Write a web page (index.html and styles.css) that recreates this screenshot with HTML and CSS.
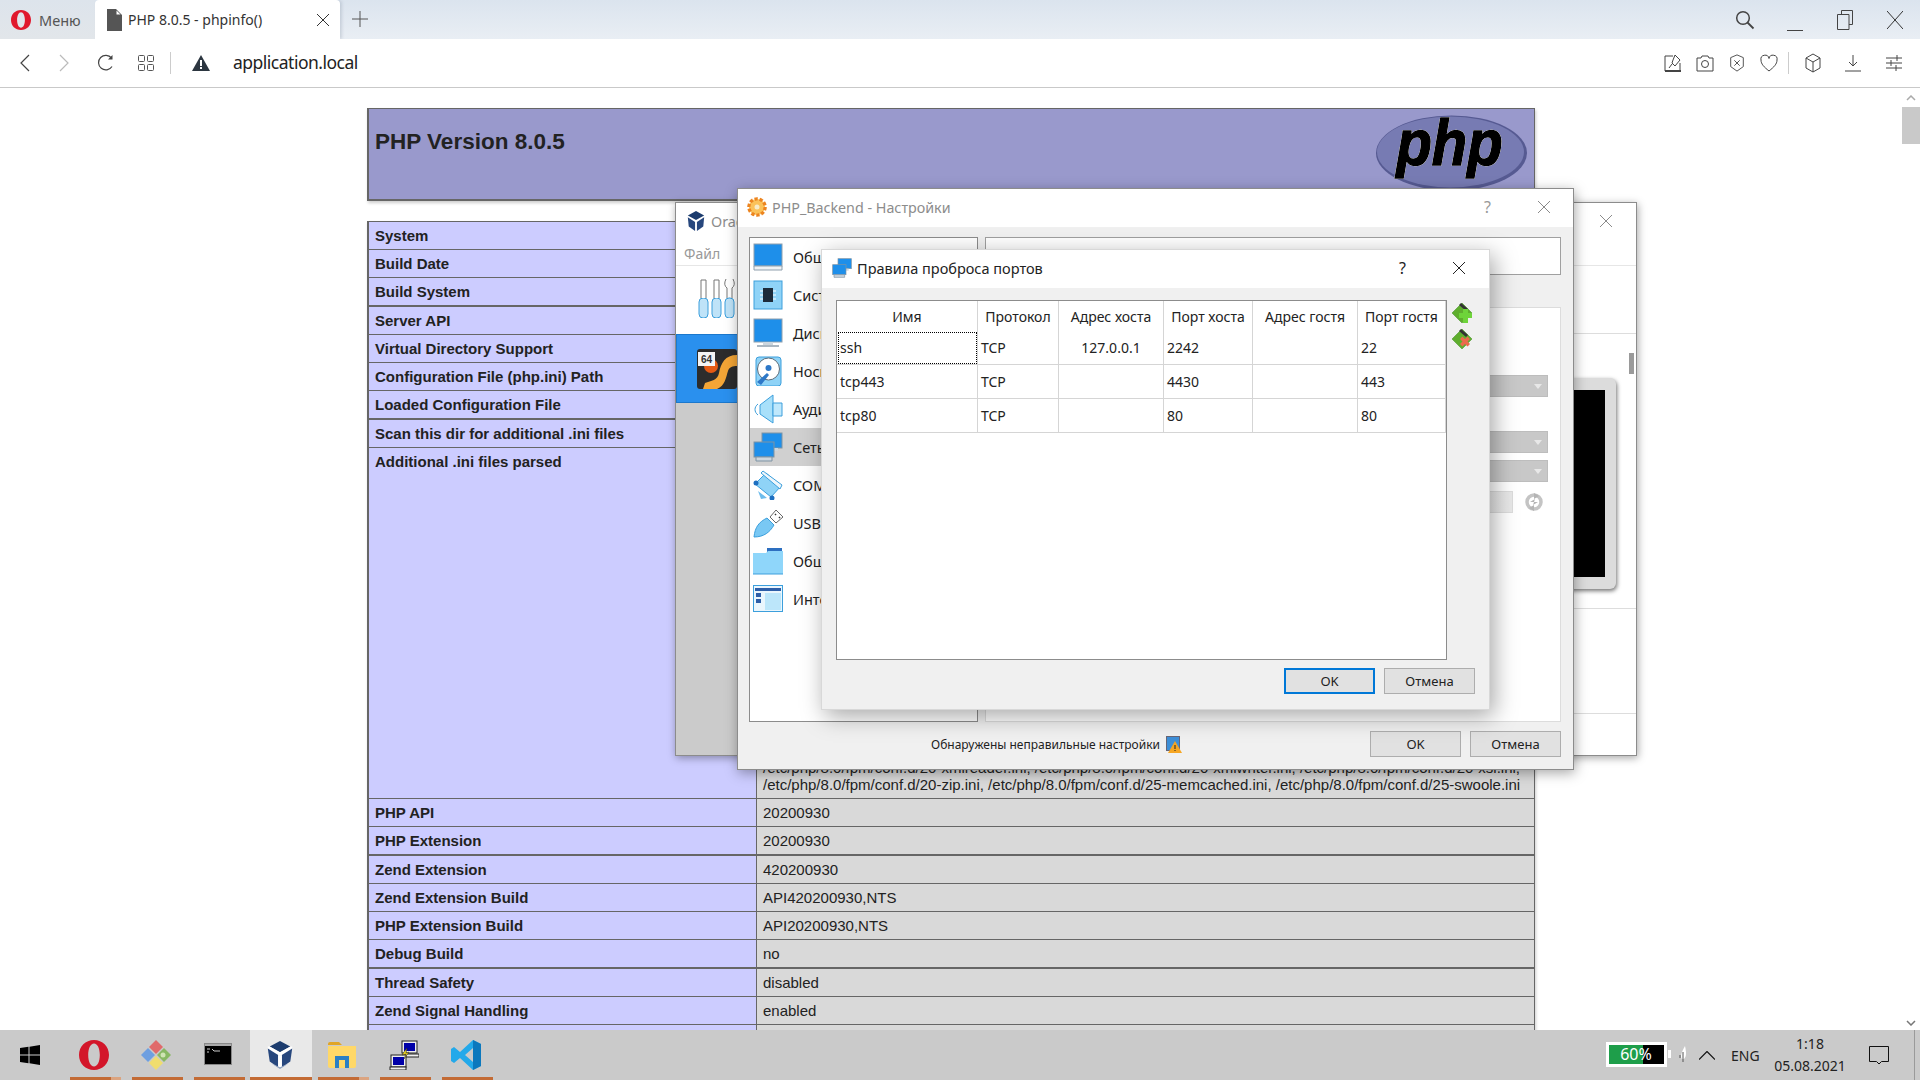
FILE: index.html
```html
<!DOCTYPE html>
<html lang="ru">
<head>
<meta charset="utf-8">
<title>PHP 8.0.5 - phpinfo()</title>
<link rel="stylesheet" href="styles.css">
</head>
<body>
<div class="app">
  <header class="tabs">
    <div class="menu-btn">
      <svg class="i-opera" viewBox="0 0 20 20"><path fill="#e0182d" fill-rule="evenodd" d="M10 0C4.200 0 0 4.300 0 10s4.200 10 10 10 10-4.300 10-10S15.800 0 10 0zm0 2.300c2.300 0 3.900 3.400 3.900 7.700s-1.600 7.700-3.900 7.700S6.100 14.300 6.100 10 7.700 2.300 10 2.300z"/></svg>
      <span>Меню</span>
    </div>
    <div class="tab">
      <svg class="i-doc" viewBox="0 0 15 22"><path fill="#555" d="M0 0h9l6 6v16H0z"/><path fill="#fff" d="M9.500 1.500l4 4h-4z"/></svg>
      <span class="tab-title">PHP 8.0.5 - phpinfo()</span>
      <svg class="i-x" viewBox="0 0 14 14"><path d="M1 1l12 12M13 1L1 13" stroke="#333" fill="none"/></svg>
    </div>
    <svg class="i-plus" viewBox="0 0 16 16"><path d="M8 0v16M0 8h16" stroke="#555" fill="none"/></svg>
    <div class="tabs-right">
      <svg class="i-search" viewBox="0 0 20 20"><circle cx="8" cy="8" r="6.300" stroke="#444" stroke-width="1.500" fill="none"/><path d="M12.500 12.500l6 6" stroke="#444" stroke-width="1.800"/></svg>
      <svg class="i-min" viewBox="0 0 16 16"><path d="M0 15.500h16" stroke="#444" fill="none"/></svg>
      <svg class="i-max" viewBox="0 0 16 20"><path d="M4.500 4V.5h11v14H12M.5 4.500h11.500v15H.5z" stroke="#444" fill="none"/></svg>
      <svg class="i-close" viewBox="0 0 16 18"><path d="M0 0l16 18M16 0L0 18" stroke="#333" fill="none"/></svg>
    </div>
  </header>

  <nav class="toolbar">
    <svg class="t-back" viewBox="0 0 10 18"><path d="M9 1L1 9l8 8" stroke="#444" stroke-width="1.200" fill="none"/></svg>
    <svg class="t-fwd" viewBox="0 0 10 18"><path d="M1 1l8 8-8 8" stroke="#bbb" stroke-width="1.200" fill="none"/></svg>
    <svg class="t-reload" viewBox="0 0 18 18"><path d="M15 12.500A7.300 7.300 0 1 1 14.500 4" stroke="#444" stroke-width="1.200" fill="none"/><path d="M15.500 1v4.500H11z" fill="#444"/></svg>
    <svg class="t-grid" viewBox="0 0 16 16"><g fill="none" stroke="#555"><rect x=".5" y=".5" width="6" height="6" rx="1"/><rect x="9.500" y=".5" width="6" height="6" rx="1"/><rect x=".5" y="9.500" width="6" height="6" rx="1"/><rect x="9.500" y="9.500" width="6" height="6" rx="1"/></g></svg>
    <span class="t-sep"></span>
    <svg class="t-warn" viewBox="0 0 18 16"><path fill="#2c3640" d="M9 0l9 16H0z"/><path fill="#fff" d="M8 5h2v6H8zM8 12h2v2H8z"/></svg>
    <span class="url">application.local</span>
    <div class="toolbar-right">
      <svg class="tr" viewBox="0 0 18 18"><path d="M1 2h8M1 2v15h15V9" stroke="#444" fill="none"/><path d="M1 17h16" stroke="#444" stroke-width="2"/><path d="M11 1l5 5-5 6-3-3 1-3zM8 10l-3 4" stroke="#444" fill="none"/></svg>
      <svg class="tr" viewBox="0 0 18 18"><path d="M1 4h4l1-2h6l1 2h4v13H1z" stroke="#444" fill="none"/><circle cx="9" cy="10" r="3.500" stroke="#444" fill="none"/></svg>
      <svg class="tr" viewBox="0 0 18 20"><path d="M9 1l7 3v10l-7 5-7-5V4z" stroke="#444" fill="none"/><path d="M6 7l6 6M12 7l-6 6" stroke="#444" fill="none"/></svg>
      <svg class="tr" viewBox="0 0 18 18"><path d="M9 17C4 13 1 10 1 6a4 4 0 0 1 8-1.500A4 4 0 0 1 17 6c0 4-3 7-8 11z" stroke="#444" fill="none"/></svg>
      <span class="t-sep t-sep-r"></span>
      <svg class="tr tr-box" viewBox="0 0 18 20"><path d="M9 1l7 4v10l-7 4-7-4V5zM2 5l7 4 7-4M9 9v10" stroke="#444" fill="none"/></svg>
      <svg class="tr tr-dl" viewBox="0 0 18 18"><path d="M9 1v11M5 8l4 4 4-4M1 17h16" stroke="#444" fill="none"/></svg>
      <svg class="tr tr-eq" viewBox="0 0 18 18"><path d="M1 4h16M1 9h16M1 14h16M12 1v6M6 6v6M11 11v6" stroke="#444" fill="none"/></svg>
    </div>
  </nav>

  <main class="viewport">
    <div class="page">
      <div class="php-head">
        <h1>PHP Version 8.0.5</h1>
        <svg class="php-logo" viewBox="0 0 152 76">
          <ellipse cx="76" cy="38" rx="75.500" ry="37.500" fill="#565a92"/>
          <ellipse cx="75" cy="37" rx="73.500" ry="35.500" fill="#777bb3"/>
          <text class="php-word" x="74" y="50" text-anchor="middle" textLength="106" lengthAdjust="spacingAndGlyphs">php</text>
        </svg>
      </div>
      <table class="info">
        <tbody>
          <tr><th>System</th><td></td></tr>
          <tr><th>Build Date</th><td></td></tr>
          <tr class="thick"><th>Build System</th><td></td></tr>
          <tr><th>Server API</th><td></td></tr>
          <tr><th>Virtual Directory Support</th><td></td></tr>
          <tr><th>Configuration File (php.ini) Path</th><td></td></tr>
          <tr class="thick"><th>Loaded Configuration File</th><td></td></tr>
          <tr><th>Scan this dir for additional .ini files</th><td></td></tr>
          <tr class="tall"><th>Additional .ini files parsed</th><td>/etc/php/8.0/fpm/conf.d/20-xmlreader.ini, /etc/php/8.0/fpm/conf.d/20-xmlwriter.ini, /etc/php/8.0/fpm/conf.d/20-xsl.ini,<br>/etc/php/8.0/fpm/conf.d/20-zip.ini, /etc/php/8.0/fpm/conf.d/25-memcached.ini, /etc/php/8.0/fpm/conf.d/25-swoole.ini</td></tr>
          <tr><th>PHP API</th><td>20200930</td></tr>
          <tr class="thick"><th>PHP Extension</th><td>20200930</td></tr>
          <tr><th>Zend Extension</th><td>420200930</td></tr>
          <tr><th>Zend Extension Build</th><td>API420200930,NTS</td></tr>
          <tr><th>PHP Extension Build</th><td>API20200930,NTS</td></tr>
          <tr class="thick"><th>Debug Build</th><td>no</td></tr>
          <tr><th>Thread Safety</th><td>disabled</td></tr>
          <tr><th>Zend Signal Handling</th><td>enabled</td></tr>
          <tr><th>&nbsp;</th><td></td></tr>
        </tbody>
      </table>
    </div>
    <div class="scrollbar">
      <svg class="sb-arrow" viewBox="0 0 10 6"><path d="M1 5l4-4 4 4" stroke="#aaa" stroke-width="1.500" fill="none"/></svg>
      <div class="sb-thumb"></div>
      <svg class="sb-arrow sb-down" viewBox="0 0 10 6"><path d="M1 1l4 4 4-4" stroke="#777" stroke-width="1.500" fill="none"/></svg>
    </div>
  </main>

  <footer class="taskbar">
    <div class="tb-start">
      <svg class="i-win" viewBox="0 0 20 20"><path fill="#000" d="M0 3l8.500-1.200v7.700H0zM9.500 1.700L20 0v9.500H9.500zM0 10.500h8.500v7.700L0 17zM9.500 10.500H20V20L9.500 18.300z"/></svg>
    </div>
    <div class="tb-item tb-split">
      <svg viewBox="0 0 30 30"><path fill="#d3162a" fill-rule="evenodd" d="M15 0C6.500 0 0 6.500 0 15s6.500 15 15 15 15-6.500 15-15S23.500 0 15 0zm0 3.500c3.500 0 5.800 5 5.800 11.500S18.500 26.500 15 26.500 9.200 21.500 9.200 15 11.500 3.500 15 3.500z"/></svg>
      <span class="bar"></span>
    </div>
    <div class="tb-item">
      <svg viewBox="0 0 30 30"><path fill="#e06a6a" d="M15 0l7 7-7 7-7-7z"/><path fill="#88b864" d="M23 8l7 7-7 7-7-7z"/><path fill="#f0dd6e" d="M15 16l7 7-7 7-7-7z"/><path fill="#6e9fe0" d="M7 8l7 7-7 7-7-7z"/><circle cx="22" cy="15" r="2.500" fill="#cfe4b4"/></svg>
      <span class="bar"></span>
    </div>
    <div class="tb-item">
      <svg class="tb-term" viewBox="0 0 28 22"><rect width="28" height="22" fill="#888"/><rect x="1" y="1" width="26" height="20" fill="#000"/><rect x="1" y="1" width="26" height="2" fill="#aaa"/><path d="M3 6h3M8 6l2 2h6M3 9h2" stroke="#ccc" fill="none"/></svg>
      <span class="bar"></span>
    </div>
    <div class="tb-item tb-active">
      <svg viewBox="0 0 30 32"><path fill="#1c3c6e" d="M15 1l11 6-11 6L4 7z"/><path fill="#fff" d="M2 7l2 0 11 6 11-6 2 0v3L15 17 2 10z"/><path fill="#27477d" d="M2 9l11 7v13L4 23z"/><path fill="#27477d" d="M28 9l-11 7v13l9-6z"/><path fill="#fff" d="M13 16l2 1 2-1v13l-2 1-2-1z"/><path fill="#8fa2c0" d="M6 25l9 6 9-6-9 4z"/></svg>
      <span class="bar"></span>
    </div>
    <div class="tb-item tb-split">
      <svg viewBox="0 0 30 26"><path fill="#e0a526" d="M1 2q0-2 2-2h9l3 3h-14z"/><path fill="#ffd868" d="M1 4h28v20q0 2-2 2H3q-2 0-2-2z"/><path fill="#2b7fc4" d="M8 14h14v12h-4v-8h-6v8H8z"/></svg>
      <span class="bar"></span>
    </div>
    <div class="tb-item">
      <svg viewBox="0 0 30 30"><rect x="13" y="1" width="15" height="12" fill="#eee" stroke="#222"/><rect x="15" y="3" width="11" height="8" fill="#0000a8"/><rect x="14" y="14" width="16" height="3" fill="#eee" stroke="#222"/><rect x="2" y="15" width="15" height="12" fill="#eee" stroke="#222"/><rect x="4" y="17" width="11" height="8" fill="#0000a8"/><rect x="1" y="27" width="16" height="3" fill="#eee" stroke="#222"/><path fill="#f6dc20" stroke="#222" stroke-width=".5" d="M18 8l-1 5 3-1-5 7 2-5-4 1 2-3 3-4z"/></svg>
      <span class="bar"></span>
    </div>
    <div class="tb-item">
      <svg viewBox="0 0 30 30"><path fill="#23a9ea" d="M22 0l8 4v22l-8 4-13-12-6 5-3-2v-12l3-2 6 5zM22 8l-8 7 8 7z"/><path fill="#0c78bd" d="M22 0l8 4v22l-8 4z"/></svg>
      <span class="bar"></span>
    </div>
    <div class="tray">
      <div class="battery"><span class="batt-fill"></span><span class="batt-text">60%</span></div>
      <span class="batt-nub"></span>
      <svg class="i-feather" viewBox="0 0 8 16"><path fill="#fff" d="M6 0C7 5 8 10 5 13L3 13C1 11 2 7 6 0z"/><path d="M4 6v10M1 9v3" stroke="#555" fill="none"/></svg>
      <svg class="i-chev" viewBox="0 0 16 9"><path d="M0 8.500l8-8 8 8" stroke="#111" fill="none" stroke-width="1.200"/></svg>
      <span class="lang">ENG</span>
      <div class="clock"><span>1:18</span><span>05.08.2021</span></div>
      <svg class="i-note" viewBox="0 0 20 19"><path d="M.5.5h19v15h-7l-2.500 2.500L7.500 15.500h-7z" stroke="#111" fill="none"/></svg>
      <span class="show-desk"></span>
    </div>
  </footer>

  <section class="win win-vbox">
    <div class="wt">
      <svg class="wt-icon" viewBox="0 0 20 22"><path fill="#1c3c6e" d="M10 0l9 5-9 5-9-5z"/><path fill="#27477d" d="M1 7l8 5v10l-7-5z"/><path fill="#27477d" d="M19 7l-8 5v10l7-5z"/></svg>
      <span class="wt-title-d">Oracle VM VirtualBox Менеджер</span>
      <svg class="wt-x" viewBox="0 0 14 14"><path d="M1 1l12 12M13 1L1 13" stroke="#8a8a8a" fill="none"/></svg>
    </div>
    <div class="vb-menu"><span>Файл</span></div>
    <div class="vb-body">
      <div class="vb-side">
        <div class="vb-tools">
          <svg viewBox="0 0 37 39"><g fill="#bfe3f8" stroke="#3c9fdc"><rect x="1" y="19" width="9" height="20" rx="4"/><rect x="14" y="19" width="9" height="20" rx="4"/><rect x="27" y="19" width="9" height="20" rx="4"/></g><path d="M3 19V1h5v18M16 19V1h5v18M29 19V9q-4-3-1-9M34 19V9q4-3 1-9" stroke="#777" fill="#fff"/></svg>
        </div>
        <div class="vb-sel">
          <svg viewBox="0 0 40 40"><rect width="40" height="40" rx="3" fill="#2c2c2c"/><path d="M40 6C28 6 24 14 22 24c-1 7-8 8-14 10l-2 6h14c8-3 9-12 11-18 1-4 5-5 9-5z" fill="#f3a536"/><circle cx="14" cy="17" r="7" fill="#e45a14"/><rect x="1" y="3" width="17" height="14" fill="#f4f4f4"/><text x="9.500" y="14" class="vm-64">64</text></svg>
        </div>
        <div class="vb-empty"></div>
      </div>
      <div class="vb-main">
        <div class="vb-s1"></div>
        <div class="vb-s2">
          <div class="monitor"><div class="screen"></div></div>
        </div>
        <div class="vb-s3"></div>
        <div class="vb-s4"></div>
        <span class="vb-thumb"></span>
      </div>
    </div>
  </section>

  <section class="win win-set">
    <div class="wt">
      <svg class="wt-icon" viewBox="0 0 20 20"><circle cx="10" cy="10" r="8" fill="#fbc25a" stroke="#ec8420" stroke-width="3.600" stroke-dasharray="3.200 1.800"/><circle cx="10" cy="10" r="6.500" fill="#fbc25a"/><circle cx="10" cy="10" r="2.500" fill="#f8ecc9"/></svg>
      <span class="wt-title-d">PHP_Backend - Настройки</span>
      <span class="wt-help">?</span>
      <svg class="wt-x" viewBox="0 0 14 14"><path d="M1 1l12 12M13 1L1 13" stroke="#8a8a8a" fill="none"/></svg>
    </div>
    <div class="set-body">
      <div class="set-main">
        <ul class="set-list">
          <li><svg viewBox="0 0 30 30"><rect x="1" y="2" width="28" height="22" fill="#1e8fea" stroke="#8fa0ae"/><path d="M1 24h28v4H1z" fill="#eef2f5" stroke="#8fa0ae"/></svg><span>Общие</span></li>
          <li><svg viewBox="0 0 30 30"><rect x="1" y="1" width="28" height="28" fill="#8fd3f7" stroke="#3c9fdc"/><rect x="10" y="8" width="10" height="14" fill="#1d2b3a"/><path d="M7 11h3M7 15h3M7 19h3M20 11h3M20 15h3M20 19h3" stroke="#fff"/></svg><span>Система</span></li>
          <li><svg viewBox="0 0 30 30"><rect x="1" y="1" width="28" height="23" fill="#1e8fea" stroke="#8fa0ae"/><path d="M10 24h10v3H10z" fill="#ccd6de"/><path d="M4 27h22v2H4z" fill="#aab7c2"/></svg><span>Дисплей</span></li>
          <li><svg viewBox="0 0 30 30"><rect x="3" y="1" width="25" height="29" rx="3" fill="#8fd3f7" stroke="#3c9fdc"/><circle cx="15.500" cy="13" r="11" fill="#fff" stroke="#5a6a78"/><circle cx="15.500" cy="12" r="3" fill="#2d78c8"/><path d="M4 26l10-9 2 2-8 10z" fill="#2d78c8"/></svg><span>Носители</span></li>
          <li><svg viewBox="0 0 30 30"><path d="M5 10c-4 3-4 8 0 11" stroke="#3c9fdc" fill="none"/><path d="M7 11l13-10v28L7 20z" fill="#a8e0fa" stroke="#3c9fdc"/><path d="M20 9h9v13h-9z" fill="#bfe8fc" stroke="#3c9fdc"/></svg><span>Аудио</span></li>
          <li class="on"><svg viewBox="0 0 30 30"><use href="#net"/></svg><span>Сеть</span></li>
          <li><svg viewBox="0 0 30 30"><path d="M2 14L13 3l15 13-10 11z" fill="#8fd3f7" stroke="#3c9fdc"/><path d="M10 1l19 14-2 4L8 3z" fill="#eef6fb" stroke="#3c9fdc"/><path d="M5 21l9 7-6 1z" fill="#6dbcec"/><circle cx="3" cy="13" r="2.500" fill="#1d6fc0"/><circle cx="19" cy="28" r="2.500" fill="#1d6fc0"/></svg><span>COM</span></li>
          <li><svg viewBox="0 0 30 30"><path d="M1 29C2 19 6 14 14 10l7 7c-4 7-10 12-20 12z" fill="#79c8f4" stroke="#3c9fdc"/><path d="M17 9l6-7 7 7-7 6z" fill="#fff" stroke="#666"/><path d="M22 6l1 1M26 9l1 1" stroke="#333" stroke-width="1.500"/></svg><span>USB</span></li>
          <li><svg viewBox="0 0 30 28"><path d="M14 1h15v6H14z" fill="#2d6fc0"/><path d="M0 6h13l2-2h15v23H0z" fill="#8fd6fa"/><path d="M0 27h30" stroke="#3c9fdc"/></svg><span>Общие папки</span></li>
          <li><svg viewBox="0 0 30 28"><rect x=".5" y=".5" width="29" height="26" fill="#eaf6fd" stroke="#3c9fdc"/><path d="M2 3h26v3H2z" fill="#2d5ea8"/><path d="M3 8h5v4H3zM3 14h5v4H3z" fill="#2d5ea8"/><path d="M12 8h16v17H12z" fill="#bce6fa"/></svg><span>Интерфейс пользователя</span></li>
        </ul>
        <div class="set-right">
          <div class="set-top"></div>
          <div class="set-panel">
            <div class="combo"><i></i></div>
            <div class="combo combo-2"><i></i></div>
            <div class="combo combo-3"><i></i></div>
            <div class="mac-row">
              <span class="mac"></span>
              <svg class="i-refresh" viewBox="0 0 18 18"><circle cx="9" cy="9" r="7" fill="none" stroke="#c4c4c4" stroke-width="3.500"/><path d="M9 0l5 3-5 3zM9 12l-5 3 5 3zM5 9l5-3-1 3h4l-5 3 1-3z" fill="#b4b4b4"/></svg>
            </div>
          </div>
        </div>
      </div>
      <div class="set-foot">
        <div class="status">
          <span>Обнаружены неправильные настройки</span>
          <svg class="i-warnbox" viewBox="0 0 16 17"><rect x=".5" y=".5" width="13" height="14" fill="#3d8fd8" stroke="#667"/><path d="M9 5l7 12H2z" fill="#f6a623"/><path d="M8.500 9h1v4h-1zM8.500 14h1v1h-1z" fill="#222"/></svg>
        </div>
        <button class="btn">OK</button>
        <button class="btn">Отмена</button>
      </div>
    </div>
  </section>

  <section class="win win-ports">
    <div class="wt">
      <svg class="wt-icon wt-net" viewBox="0 0 30 30"><use href="#net"/></svg>
      <span class="wt-title">Правила проброса портов</span>
      <span class="wt-help wt-help-on">?</span>
      <svg class="wt-x" viewBox="0 0 14 14"><path d="M1 1l12 12M13 1L1 13" stroke="#222" fill="none"/></svg>
    </div>
    <div class="ports-body">
      <div class="ports-main">
        <div class="ports-box">
          <table class="ports">
            <colgroup><col class="c1"><col class="c2"><col class="c3"><col class="c4"><col class="c5"><col class="c6"></colgroup>
            <thead><tr><th>Имя</th><th>Протокол</th><th>Адрес хоста</th><th>Порт хоста</th><th>Адрес гостя</th><th>Порт гостя</th></tr></thead>
            <tbody>
              <tr><td class="focus">ssh</td><td>TCP</td><td class="mid">127.0.0.1</td><td>2242</td><td></td><td>22</td></tr>
              <tr><td>tcp443</td><td>TCP</td><td></td><td>4430</td><td></td><td>443</td></tr>
              <tr><td>tcp80</td><td>TCP</td><td></td><td>80</td><td></td><td>80</td></tr>
            </tbody>
          </table>
        </div>
        <div class="ports-tools">
          <svg viewBox="0 0 20 20"><path d="M10 0l10 10-10 10L0 10z" fill="#5fae2e" stroke="#3d8a1e" stroke-width=".5"/><path d="M9 0l7 6-2 2-7-6z" fill="#333"/><path d="M11 6h5v4h4v5h-4v5h-5v-5H7v-5h4z" fill="#6ed43a"/></svg>
          <svg viewBox="0 0 20 20"><path d="M10 0l10 10-10 10L0 10z" fill="#5fae2e" stroke="#3d8a1e" stroke-width=".5"/><path d="M9 0l7 6-2 2-7-6z" fill="#333"/><path d="M9 9l2.500-2.500L14 9l2.500-2.500L19 9l-2.500 2.500L19 14l-2.500 2.500L14 14l-2.500 2.500L9 14l2.500-2.500z" fill="#ec6a4c" transform="translate(-1 1)"/></svg>
        </div>
      </div>
      <div class="ports-foot">
        <button class="btn btn-def">OK</button>
        <button class="btn">Отмена</button>
      </div>
    </div>
  </section>

  <svg class="defs" width="0" height="0"><defs><g id="net"><rect x="9" y="1" width="20" height="15" fill="#1e8fea" stroke="#7f93a3"/><path d="M13 16h12v3H13z" fill="#ccd6de"/><rect x="1" y="10" width="20" height="15" fill="#1e8fea" stroke="#7f93a3"/><path d="M3 25h16v4H3z" fill="#ccd6de" stroke="#7f93a3"/></g></defs></svg>
</div>
</body>
</html>
```

FILE: styles.css
```css
*{box-sizing:border-box}
html,body{margin:0;padding:0;height:100%}
body{font-family:"Noto Sans","Liberation Sans",sans-serif;color:#222;overflow:hidden;background:#fff}
svg{display:block;flex:none}
.app{position:relative;width:1920px;height:1080px;display:flex;flex-direction:column;overflow:hidden}
.defs{position:absolute}

/* browser tabs */
.tabs{height:39px;flex:none;display:flex;align-items:stretch;background:linear-gradient(#dbe4ee,#e9eef4)}
.menu-btn{width:95px;display:flex;align-items:center;padding-left:11px;gap:8px;font-size:14.500px;color:#555;background:linear-gradient(#dde4ec,#e2e6ea)}
.i-opera{width:20px;height:20px}
.tab{width:245px;background:#fff;border-radius:4px 4px 0 0;display:flex;align-items:center;padding-left:12px;font-size:14px;color:#333;box-shadow:2px 0 3px rgba(120,130,150,.25)}
.i-doc{width:15px;height:22px}
.tab-title{margin-left:6px;flex:1;white-space:nowrap}
.i-x{width:14px;height:14px;margin-right:10px}
.i-plus{width:16px;height:16px;margin:11px 0 0 12px}
.tabs-right{margin-left:auto;display:flex;align-items:center;position:relative}
.i-search{width:20px;height:20px;margin-right:32px}
.i-min{width:16px;height:16px;margin-right:34px;margin-top:6px}
.i-max{width:16px;height:20px;margin-right:34px}
.i-close{width:16px;height:18px;margin-right:17px}

/* toolbar */
.toolbar{height:49px;flex:none;display:flex;align-items:center;background:#fff;border-bottom:1px solid #c9c9c9;padding-left:20px}
.t-back{width:10px;height:18px}
.t-fwd{width:10px;height:18px;margin-left:29px}
.t-reload{width:18px;height:18px;margin-left:28px}
.t-grid{width:16px;height:16px;margin-left:23px}
.t-sep{width:1px;height:22px;background:#ccc;margin-left:16px}
.t-warn{width:18px;height:16px;margin-left:21px}
.url{margin-left:23px;font-size:17.500px;color:#222;letter-spacing:-.5px;padding-bottom:2px}
.toolbar-right{margin-left:auto;display:flex;align-items:center;padding-right:17px}
.tr{width:18px;height:18px;margin-left:14px}
.t-sep-r{margin-left:10px}
.tr-box{margin-left:15px;height:20px}
.tr-dl{margin-left:22px}
.tr-eq{margin-left:23px}

/* page */
.viewport{flex:1;min-height:0;display:flex}
.page{flex:1;min-width:0;overflow:hidden;padding-top:20px;font-family:"Liberation Sans",Arial,sans-serif;color:#222}
.php-head{width:1168px;height:93px;margin:0 auto 20px;background:#99c;border:1px solid #666;border-left-width:2px;border-bottom-width:2px;box-shadow:1px 2px 3px rgba(0,0,0,.2);display:flex;justify-content:space-between;padding:6px 6px 0 6px}
.php-head h1{margin:14px 0 0;font-size:22.500px;line-height:26px;font-weight:bold}
.php-logo{width:153px;height:76px;overflow:visible}
.php-word{font:italic bold 64px "Liberation Sans",sans-serif;fill:#000;stroke:#000;stroke-width:1.600px;filter:drop-shadow(0 0 .7px #fff) drop-shadow(0 0 .5px #fff)}
.info{width:1168px;margin:0 auto;border-collapse:separate;border-spacing:0;table-layout:fixed;border-top:1px solid #666;font-size:15px;box-shadow:1px 2px 3px rgba(0,0,0,.2)}
.info th,.info td{height:28px;padding:0 6px;border-bottom:1px solid #666;text-align:left;vertical-align:middle}
.info th{width:390px;background:#ccf;font-weight:bold;border-left:2px solid #666;border-right:1px solid #666;color:#222;white-space:nowrap}
.info td{background:#d9d9d9;border-right:1px solid #666;color:#222;white-space:nowrap}
.info .thick th,.info .thick td{height:29px;border-bottom-width:2px}
.info .tall th{height:351px;vertical-align:top;padding-top:5px}
.info .tall td{height:351px;vertical-align:bottom;padding-bottom:5px;line-height:17px}
.scrollbar{width:18px;flex:none;background:#fff;position:relative;display:flex;flex-direction:column;align-items:center;padding-top:7px}
.sb-arrow{width:10px;height:6px}
.sb-thumb{width:18px;height:37px;background:#c9c9c9;margin-top:6px}
.sb-down{margin-top:auto;margin-bottom:4px}

/* taskbar */
.taskbar{height:50px;flex:none;background:#cacaca;display:flex;align-items:stretch}
.tb-start{width:64px;display:flex;align-items:center;padding-left:20px}
.i-win{width:20px;height:20px}
.tb-item{width:62px;display:flex;flex-direction:column;align-items:center;justify-content:flex-start;position:relative;padding-top:10px}
.tb-item>svg{width:30px;height:30px;margin-right:2px}
.tb-item>.tb-term{width:28px;height:22px;margin-top:3px}
.bar{position:absolute;left:5.500px;right:5.500px;bottom:0;height:3px;background:#c36b35}
.tb-split .bar{background:linear-gradient(to right,#c36b35 80%,#dba480 80%)}
.tb-active{background:#e9e9e9}
.tb-active .bar{left:0;right:0}
.tray{margin-left:auto;display:flex;align-items:center;position:relative;color:#222}
.battery{width:61px;height:25px;border:3px solid #fff;background:#000;position:relative;margin-bottom:2px;display:flex;align-items:center;justify-content:center}
.batt-fill{position:absolute;left:0;top:0;bottom:0;width:34px;background:#1e9e4a}
.batt-text{position:relative;color:#fff;font-size:16px;line-height:19px}
.batt-nub{width:3px;height:8px;background:#fff;margin-left:1px;margin-bottom:2px}
.i-feather{width:8px;height:16px;margin-left:8px;margin-bottom:2px}
.i-chev{width:16px;height:9px;margin-left:12.500px}
.lang{font-size:14px;margin-left:16px;margin-right:0;width:30px}
.clock{width:80px;margin-left:9px;display:flex;flex-direction:column;align-items:center;font-size:14px;line-height:22px}
.i-note{width:20px;height:19px;margin-left:19px}
.show-desk{width:1px;height:50px;background:#9a9a9a;margin-left:25px;margin-right:5px}

/* windows */
.win{position:absolute;display:flex;flex-direction:column;border:1px solid #8c8c8c;background:#f0f0f0;font-size:14px}
.win-vbox{left:675px;top:202px;width:962px;height:554px;background:#fff;box-shadow:1px 2px 8px rgba(0,0,0,.35)}
.win-set{left:737px;top:188px;width:837px;height:582px;box-shadow:1px 3px 12px rgba(0,0,0,.35)}
.win-ports{left:821px;top:249px;width:669px;height:461px;border-color:#d8d8d8;box-shadow:4px 6px 22px rgba(0,0,0,.35)}
.wt{height:38px;flex:none;background:#fff;display:flex;align-items:center;padding:0 0 2px 10px;white-space:nowrap}
.wt-icon{width:20px;height:20px}
.wt-net{width:20px;height:20px}
.wt-title-d{margin-left:5px;font-size:14.300px;color:#8c8c8c;flex:1}
.wt-title{margin-left:5px;font-size:14.500px;color:#222;flex:1}
.wt-help{font-size:16px;color:#999;margin-right:46px}
.wt-help-on{color:#222}
.wt-x{width:14px;height:14px;margin-right:23px}
.win-set .wt{padding-left:9px}
.win-set .wt-x{margin-right:22px}

/* virtualbox manager */
.vb-menu{height:25px;flex:none;padding-left:8px;font-size:14px;color:#999;display:flex;align-items:center;border-bottom:1px solid #e6e6e6}
.vb-body{flex:1;display:flex;min-height:0}
.vb-side{width:300px;flex:none;display:flex;flex-direction:column}
.vb-tools{height:68px;padding:13px 0 0 22px;background:#fff}
.vb-tools svg{width:37px;height:39px}
.vb-sel{height:69px;background:#2a90ee;padding:14px 0 0 20px;border:1px solid #1c78cc;border-right:0}
.vb-sel svg{width:40px;height:40px}
.vm-64{font:bold 10px "Liberation Sans",sans-serif;fill:#333;text-anchor:middle}
.vb-empty{flex:1;background:#cbcbcb}
.vb-main{flex:1;position:relative;display:flex;flex-direction:column;background:#fff}
.vb-s1{height:68px;border-bottom:1px solid #ddd}
.vb-s2{height:275px;border-bottom:1px solid #ddd;display:flex;justify-content:flex-end;padding:44px 20px 0 0}
.monitor{width:460px;height:211px;background:#dcdcdc;border-radius:6px;box-shadow:1px 2px 4px rgba(0,0,0,.55);padding:12px 11px 12px 12px}
.screen{height:100%;background:#000}
.vb-s3{height:105px;border-bottom:1px solid #ddd}
.vb-s4{flex:1}
.vb-thumb{position:absolute;right:2px;top:87px;width:5px;height:21px;background:#9a9a9a}

/* settings */
.set-body{flex:1;min-height:0;display:flex;flex-direction:column;padding:10px 12px 12px 11px}
.set-main{flex:1;min-height:0;display:flex;gap:7px}
.set-list{list-style:none;margin:0;padding:0;width:229px;flex:none;background:#fff;border:1px solid #8c8c8c;overflow:hidden}
.set-list li{height:38px;display:flex;align-items:center;padding-left:3px;gap:10px;white-space:nowrap;color:#222;font-size:14.500px}
.set-list li svg{width:30px;height:30px}
.set-list .on{background:#d0d0d0}
.set-right{flex:1;display:flex;flex-direction:column;gap:32px}
.set-top{height:38px;background:#fff;border:1px solid #a0a0a0}
.set-panel{flex:1;background:#fff;border:1px solid #dcdcdc;display:flex;flex-direction:column;align-items:flex-end;padding:67px 12px 0 0}
.combo{width:300px;height:22px;background:#c8c8c8;border:1px solid #bdbdbd;position:relative;flex:none}
.combo i{position:absolute;right:5px;top:8px;border-left:4px solid transparent;border-right:4px solid transparent;border-top:5px solid #e8e8e8}
.combo-2{margin-top:34px}
.combo-3{margin-top:7px}
.mac-row{display:flex;align-items:center;margin-top:9px;margin-right:5px}
.mac{width:300px;height:22px;background:linear-gradient(90deg,#f0f0f0,#e8e8e8);border:1px solid #dcdcdc}
.i-refresh{width:18px;height:18px;margin-left:12px}
.set-foot{height:26px;margin-top:9px;flex:none;display:flex;gap:9px}
.status{flex:1;display:flex;align-items:center;justify-content:center;gap:6px;font-size:12px;padding-left:3px;color:#222;white-space:nowrap}
.i-warnbox{width:16px;height:17px}
.btn{width:91px;height:26px;background:#e1e1e1;border:1px solid #adadad;font:13px "Noto Sans","Liberation Sans",sans-serif;color:#222;padding:0}
.btn-def{border:2px solid #0078d7}

/* port rules */
.ports-body{flex:1;min-height:0;display:flex;flex-direction:column;padding:12px 14px 15px 14px}
.ports-main{flex:1;min-height:0;display:flex}
.ports-box{width:611px;flex:none;background:#fff;border:1px solid #8c8c8c}
.ports{width:609px;table-layout:fixed;border-collapse:separate;border-spacing:0;font-size:14px}
.c1{width:141px}.c2{width:81px}.c3{width:105px}.c4{width:89px}.c5{width:105px}.c6{width:88px}
.ports th{height:30px;font-weight:normal;text-align:center;padding:0;border-right:1px solid #d5d5d5;white-space:nowrap}
.ports td{height:34px;padding:0 0 0 3px;border-right:1px solid #d5d5d5;border-bottom:1px solid #d5d5d5}
.ports .mid{text-align:center;padding:0}
.ports .focus{outline:1px dotted #000;outline-offset:-2px}
.ports-tools{display:flex;flex-direction:column;gap:6px;margin:3px 0 0 5px}
.ports-tools svg{width:20px;height:20px}
.ports-foot{margin-top:8px;display:flex;justify-content:flex-end;gap:9px;flex:none;height:26px}
```
